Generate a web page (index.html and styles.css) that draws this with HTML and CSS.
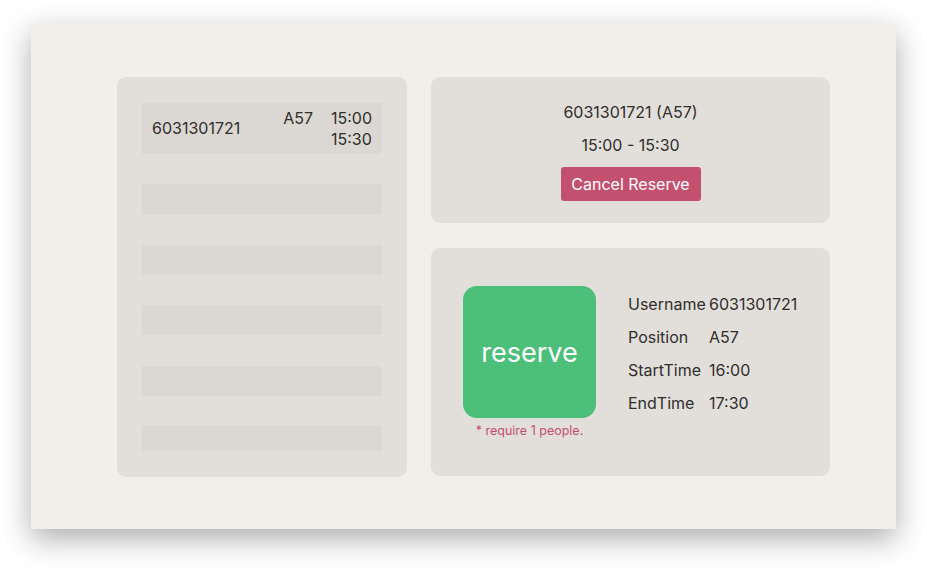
FILE: index.html
```html
<!DOCTYPE html>
<html>
<head>
<meta charset="utf-8">
<link rel="stylesheet" href="styles.css">
</head>
<body>
<div class="window">
  <div class="list-panel">
    <div class="list">
      <div class="row row-filled">
        <div class="row-user">6031301721</div>
        <div class="row-pos">A57</div>
        <div class="row-time"><div>15:00</div><div>15:30</div></div>
      </div>
      <div class="row"></div>
      <div class="row"></div>
      <div class="row"></div>
      <div class="row"></div>
      <div class="row"></div>
    </div>
  </div>
  <div class="right-col">
    <div class="panel current">
      <div class="cur-line">6031301721 (A57)</div>
      <div class="cur-line">15:00 - 15:30</div>
      <button class="cancel-btn">Cancel Reserve</button>
    </div>
    <div class="panel reserve-panel">
      <div class="reserve-col">
        <div class="reserve-btn">reserve</div>
        <div class="note">* require 1 people.</div>
      </div>
      <div class="info">
        <div class="info-label">Username</div><div class="info-value">6031301721</div>
        <div class="info-label">Position</div><div class="info-value">A57</div>
        <div class="info-label">StartTime</div><div class="info-value">16:00</div>
        <div class="info-label">EndTime</div><div class="info-value">17:30</div>
      </div>
    </div>
  </div>
</div>
</body>
</html>
```
FILE: styles.css
```css
* { box-sizing: border-box; }
html, body { margin: 0; padding: 0; background: #ffffff; }
body {
  font-family: Inter, "Noto Sans", sans-serif;
  color: #2f2e2c;
  padding: 23px 0 0 31px;
  height: 568px;
  overflow: hidden;
}
.window {
  width: 865px;
  height: 506px;
  background: #f2efe8;
  box-shadow: 0 10px 28px rgba(0,0,0,0.32);
  padding: 54px 0 0 86px;
  display: flex;
  gap: 24px;
  align-items: flex-start;
}
.list-panel {
  width: 290px;
  height: 400px;
  background: #e2dfdb;
  border-radius: 9px;
  padding: 26px 25px;
}
.list {
  height: 100%;
  overflow: hidden;
  display: flex;
  flex-direction: column;
  gap: 30.4px;
}
.row {
  flex: 0 0 30px;
  background: #dbd8d3;
}
.row-filled {
  flex: 0 0 51px;
  display: grid;
  grid-template-columns: 1fr auto auto;
  column-gap: 18px;
  padding: 4.5px 10px;
  font-size: 16px;
  line-height: 21px;
}
.row-user { align-self: center; }
.row-pos { align-self: start; }
.right-col {
  width: 399px;
  display: flex;
  flex-direction: column;
  gap: 25px;
}
.panel {
  background: #e2dfdb;
  border-radius: 9px;
}
.current {
  height: 146px;
  display: flex;
  flex-direction: column;
  align-items: center;
  padding-top: 24px;
  gap: 11px;
}
.cur-line {
  font-size: 16px;
  line-height: 22px;
}
.cancel-btn {
  width: 140px;
  height: 34px;
  border: none;
  border-radius: 3px;
  background: #c4506f;
  color: #ffffff;
  font-family: Inter, "Noto Sans", sans-serif;
  font-size: 16px;
  padding: 0;
}
.reserve-panel {
  height: 228px;
  display: flex;
  align-items: flex-start;
  padding: 38px 32px;
  gap: 32px;
}
.reserve-col {
  display: flex;
  flex-direction: column;
  align-items: center;
  gap: 5px;
}
.reserve-btn {
  width: 133px;
  height: 132px;
  border-radius: 14px;
  background: #4cbf7a;
  color: #ffffff;
  font-size: 27px;
  display: flex;
  align-items: center;
  justify-content: center;
}
.note {
  font-size: 12.5px;
  line-height: 15px;
  color: #c4506f;
}
.info {
  display: grid;
  grid-template-columns: 81px auto;
  font-size: 16px;
  line-height: 33px;
  margin-top: 2px;
}
```
